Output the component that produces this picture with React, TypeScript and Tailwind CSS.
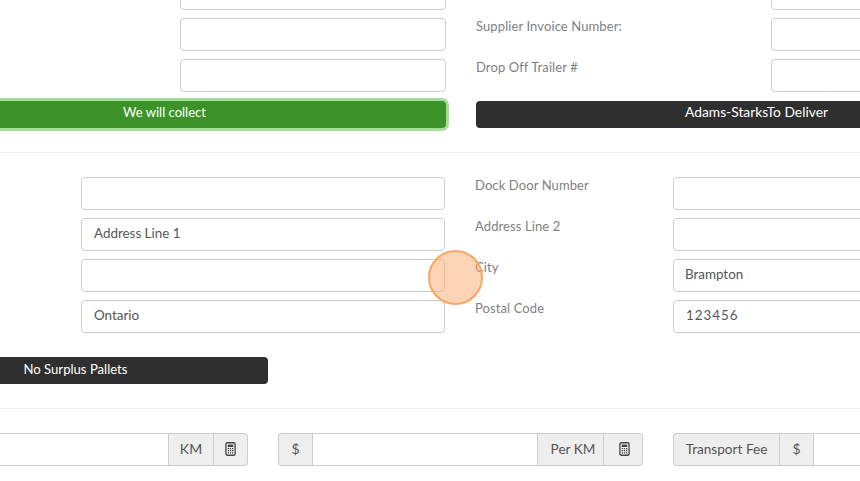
const font = "[font-family:Lato,'Noto_Sans',sans-serif]";

function CalcIcon() {
  return (
    <svg width="11" height="14" viewBox="0 0 12 14" fill="none" preserveAspectRatio="none">
      <rect x="1" y="0.75" width="10" height="12.5" rx="1.5" stroke="#444" strokeWidth="1.4" />
      <rect x="3" y="2.6" width="6" height="2.4" fill="#444" />
      <path d="M3 6.6h1.4M5.3 6.6h1.4M7.6 6.6H9M3 8.7h1.4M5.3 8.7h1.4M7.6 8.7H9M3 10.8h1.4M5.3 10.8h1.4M7.6 10.8H9" stroke="#444" strokeWidth="1.3" />
    </svg>
  );
}

function TextBox({ value = "", className = "pl-[12px]" }: { value?: string; className?: string }) {
  return (
    <input
      readOnly
      value={value}
      className={`h-[33px] w-full min-w-0 rounded border border-[#ccc] bg-white pb-[3px] pr-3 text-[13.4px] text-[#555] outline-none ${className}`}
    />
  );
}

function FieldRow({ label, labelWidth, value, valueClass }: { label?: string; labelWidth: string; value?: string; valueClass?: string }) {
  return (
    <div className="flex">
      <label className={`${labelWidth} shrink-0 text-[13px] leading-[17px] tracking-[0.1px] text-[#808080]`}>{label}</label>
      <TextBox value={value} className={valueClass} />
    </div>
  );
}

function Addon({ children, className = "" }: { children: React.ReactNode; className?: string }) {
  return (
    <span className={`flex h-[33px] shrink-0 items-center justify-center border border-[#ccc] bg-[#eee] pb-[1px] text-[#555] ${className}`}>
      {children}
    </span>
  );
}

export default function App() {
  return (
    <div className={`relative h-[481px] w-[860px] overflow-hidden bg-white ${font}`}>
      <div className="-ml-[117px] -mt-[23px] w-[1154px]">
        {/* Collection / delivery */}
        <div className="grid grid-cols-[563px_561px] gap-x-[30px]">
          <div className="flex flex-col gap-2">
            <FieldRow labelWidth="w-[297px]" />
            <FieldRow labelWidth="w-[297px]" />
            <FieldRow labelWidth="w-[297px]" />
            <button className="mt-[1px] h-[27px] w-full rounded bg-[#3c9429] pb-[4px] text-[13px] text-white ring-[3px] ring-[#a5dd9b]">We will collect</button>
          </div>
          <div className="flex flex-col gap-2">
            <FieldRow labelWidth="w-[295px]" />
            <FieldRow labelWidth="w-[295px]" label="Supplier Invoice Number:" />
            <FieldRow labelWidth="w-[295px]" label="Drop Off Trailer #" />
            <button className="mt-[1px] h-[27px] w-full rounded bg-[#2f2f2f] pb-[4px] text-[13.8px] text-white">Adams-StarksTo Deliver</button>
          </div>
        </div>

        <hr className="mb-6 mt-6 border-[#eee]" />

        {/* Address */}
        <div className="grid grid-cols-[562px_561px] gap-x-[30px]">
          <div className="flex flex-col gap-2">
            <FieldRow labelWidth="w-[198px]" />
            <FieldRow labelWidth="w-[198px]" value="Address Line 1" />
            <FieldRow labelWidth="w-[198px]" />
            <FieldRow labelWidth="w-[198px]" value="Ontario" />
          </div>
          <div className="flex flex-col gap-2">
            <FieldRow labelWidth="w-[198px]" label="Dock Door Number" />
            <FieldRow labelWidth="w-[198px]" label="Address Line 2" />
            <FieldRow labelWidth="w-[198px]" label="City" value="Brampton" valueClass="pl-[11px]" />
            <FieldRow labelWidth="w-[198px]" label="Postal Code" value="123456" valueClass="pl-[12px] tracking-[1px]" />
          </div>
        </div>

        <button className="mt-6 block h-[27px] w-[385px] rounded bg-[#2f2f2f] pb-[2px] text-[13.1px] text-white">No Surplus Pallets</button>

        <hr className="mb-6 mt-6 border-[#eee]" />

        {/* Rates */}
        <div className="grid grid-cols-[365px_365px_365px] gap-x-[30px]">
          <div className="flex">
            <TextBox className="rounded-r-none border-r-0" />
            <Addon className="w-[46px] text-sm">KM</Addon>
            <Addon className="w-[34px] rounded-r border-l-0"><CalcIcon /></Addon>
          </div>
          <div className="flex">
            <Addon className="w-[34px] rounded-l border-r-0 text-sm">$</Addon>
            <TextBox className="rounded-none" />
            <Addon className="w-[66px] border-l-0 pl-[5px] text-[13.6px]">Per KM</Addon>
            <Addon className="w-[39px] rounded-r border-l-0 pl-[3px]"><CalcIcon /></Addon>
          </div>
          <div className="flex">
            <Addon className="w-[106px] rounded-l border-r-0 text-[13.6px]">Transport Fee</Addon>
            <Addon className="w-[34px] border-r-0 text-sm">$</Addon>
            <TextBox className="rounded-l-none" />
          </div>
        </div>
      </div>

      {/* Click marker */}
      <div className="pointer-events-none absolute left-[428px] top-[250px] h-[55px] w-[55px] rounded-full border-2 border-[#f7a662] bg-[#f9a869]/50" />
    </div>
  );
}
